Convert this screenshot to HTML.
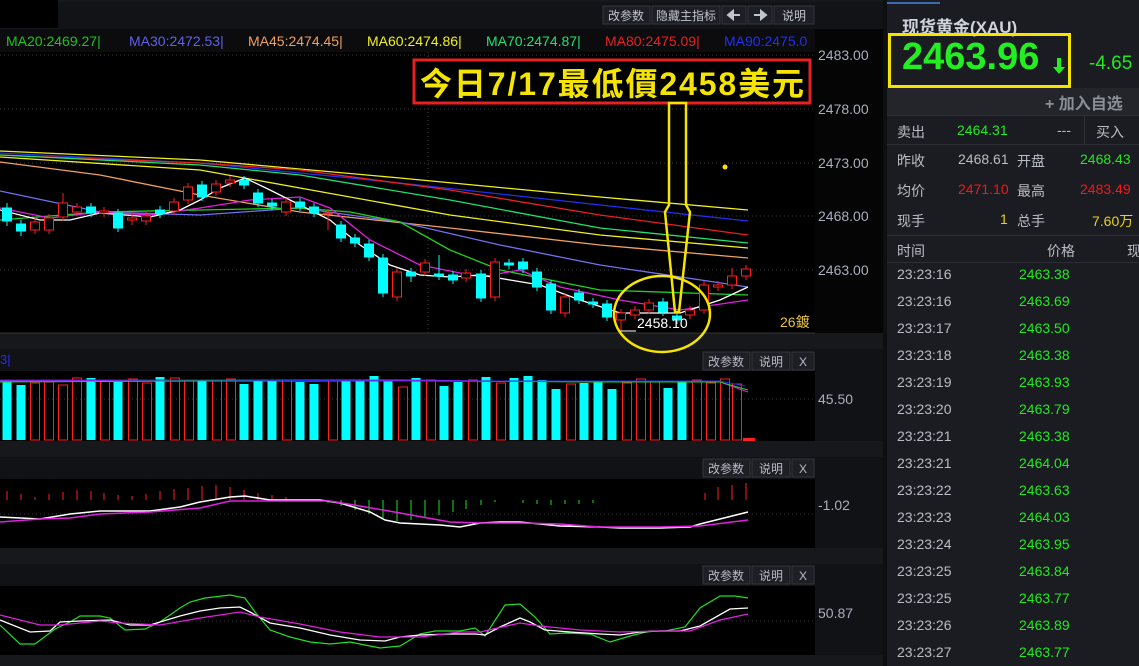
<!DOCTYPE html>
<html><head><meta charset="utf-8"><style>
body{margin:0;width:1139px;height:666px;background:#17181c;overflow:hidden;position:relative;font-family:"Liberation Sans","Noto Sans CJK SC",sans-serif}
svg text{font-family:"Liberation Sans","Noto Sans CJK SC",sans-serif}
#rp{position:absolute;left:887px;top:0;width:252px;height:666px;background:#1b1c21;color:#c8ccd4}
.a{position:absolute;white-space:nowrap}
.g{color:#22e822}.r{color:#f01818}.y{color:#e8d020}.gr{color:#b8bcc6}
.hl{position:absolute;left:0;width:252px;height:1px;background:#2c2e34}
</style></head><body>
<svg width="887" height="666" style="position:absolute;left:0;top:0">
<rect x="0" y="0" width="887" height="666" fill="#17181c"/>
<rect x="0" y="0" width="58" height="28" fill="#000"/>
<rect x="58" y="2" width="825" height="27" fill="#121317"/>
<g font-size="12" fill="#c0c4cc">
<rect x="603" y="6" width="47" height="18" fill="#1e1f24" stroke="#34363c"/><text x="608" y="20">改参数</text>
<rect x="652" y="6" width="68" height="18" fill="#1e1f24" stroke="#34363c"/><text x="656" y="20">隐藏主指标</text>
<rect x="722" y="6" width="24" height="18" fill="#1e1f24" stroke="#34363c"/><path d="M728 15h12M728 15l5-4v8z" stroke="#c0c4cc" fill="#c0c4cc" stroke-width="2"/>
<rect x="748" y="6" width="24" height="18" fill="#1e1f24" stroke="#34363c"/><path d="M754 15h12M766 15l-5-4v8z" stroke="#c0c4cc" fill="#c0c4cc" stroke-width="2"/>
<rect x="774" y="6" width="40" height="18" fill="#1e1f24" stroke="#34363c"/><text x="782" y="20">说明</text>
</g>
<rect x="0" y="29" width="815" height="23" fill="#0c0c0e"/>
<g font-size="14">
<text x="6" y="46" fill="#22c020">MA20:2469.27|</text>
<text x="129" y="46" fill="#6060e8">MA30:2472.53|</text>
<text x="248" y="46" fill="#f0a060">MA45:2474.45|</text>
<text x="367" y="46" fill="#f0f020">MA60:2474.86|</text>
<text x="486" y="46" fill="#20e070">MA70:2474.87|</text>
<text x="605" y="46" fill="#e82020">MA80:2475.09|</text>
<text x="724" y="46" fill="#2030f0">MA90:2475.0</text>
</g>
<rect x="0" y="52" width="815" height="281" fill="#000"/>
<rect x="815" y="29" width="68" height="304" fill="#050506"/>
<g stroke="#3a3a3a" stroke-dasharray="1,3"><line x1="0" y1="55" x2="815" y2="55"/><line x1="0" y1="109" x2="815" y2="109"/><line x1="0" y1="163" x2="815" y2="163"/><line x1="0" y1="216" x2="815" y2="216"/><line x1="0" y1="270" x2="815" y2="270"/><line x1="428" y1="52" x2="428" y2="333"/></g>
<g font-size="14" fill="#a8aeba"><text x="818" y="60">2483.00</text><text x="818" y="114">2478.00</text><text x="818" y="168">2473.00</text><text x="818" y="221">2468.00</text><text x="818" y="275">2463.00</text></g>
<g fill="none" stroke-width="1.3">
<polyline stroke="#f0f020" points="0,151 200,160 400,178 600,197 748,210"/>
<polyline stroke="#2030f0" points="0,153 200,163 400,183 600,205 748,221"/>
<polyline stroke="#e82020" points="0,155 200,163 300,170 450,190 600,215 748,235"/>
<polyline stroke="#20e070" points="0,155 200,165 300,175 450,200 600,228 748,243"/>
<polyline stroke="#f0f020" points="0,157 200,170 300,188 450,215 600,235 748,248"/>
<polyline stroke="#f0a060" points="0,162 100,175 200,195 300,212 450,228 600,245 748,258"/>
<polyline stroke="#7070f0" points="0,191 100,212 200,215 300,208 400,222 500,245 600,265 748,287"/>
<polyline stroke="#20d020" points="0,220 100,212 200,210 300,208 350,212 400,222 450,250 500,270 600,290 748,295"/>
<polyline stroke="#e020e0" points="0,208 50,218 100,212 150,215 200,208 250,200 300,197 330,208 370,240 420,265 480,277 520,270 560,287 620,300 680,310 748,300"/>
<polyline stroke="#fff" points="0,210 40,220 70,220 100,213 150,217 180,210 200,200 220,188 245,178 270,190 300,205 330,220 360,245 390,265 420,275 450,277 480,275 510,280 540,285 580,300 620,313 680,313 720,300 748,287"/>
</g>
<g stroke-width="1">
<g stroke="#00ffff" fill="#00ffff">
<line x1="7" y1="203" x2="7" y2="226"/><rect x="2.5" y="208" width="9" height="13"/>
<line x1="21" y1="220" x2="21" y2="236"/><rect x="16.5" y="224" width="9" height="7"/>
<line x1="91" y1="203" x2="91" y2="217"/><rect x="86.5" y="207" width="9" height="6"/>
<line x1="118" y1="209" x2="118" y2="232"/><rect x="113.5" y="213" width="9" height="15"/>
<line x1="160" y1="206" x2="160" y2="218"/><rect x="155.5" y="210" width="9" height="4"/>
<line x1="202" y1="181" x2="202" y2="201"/><rect x="197.5" y="185" width="9" height="12"/>
<line x1="244" y1="176" x2="244" y2="189"/><rect x="239.5" y="180" width="9" height="5"/>
<line x1="258" y1="189" x2="258" y2="207"/><rect x="253.5" y="193" width="9" height="10"/>
<line x1="272" y1="199" x2="272" y2="210"/><rect x="267.5" y="203" width="9" height="3"/>
<line x1="300" y1="198" x2="300" y2="211"/><rect x="295.5" y="202" width="9" height="5"/>
<line x1="314" y1="203" x2="314" y2="217"/><rect x="309.5" y="207" width="9" height="6"/>
<line x1="341" y1="221" x2="341" y2="242"/><rect x="336.5" y="225" width="9" height="13"/>
<line x1="355" y1="234" x2="355" y2="247"/><rect x="350.5" y="238" width="9" height="5"/>
<line x1="369" y1="240" x2="369" y2="261"/><rect x="364.5" y="244" width="9" height="13"/>
<line x1="383" y1="254" x2="383" y2="297"/><rect x="378.5" y="258" width="9" height="35"/>
<line x1="411" y1="268" x2="411" y2="282"/><rect x="406.5" y="272" width="9" height="4"/>
<line x1="439" y1="255" x2="439" y2="280"/><rect x="434.5" y="274" width="9" height="2"/>
<line x1="453" y1="271" x2="453" y2="284"/><rect x="448.5" y="275" width="9" height="5"/>
<line x1="481" y1="270" x2="481" y2="302"/><rect x="476.5" y="274" width="9" height="24"/>
<line x1="509" y1="259" x2="509" y2="269"/><rect x="504.5" y="263" width="9" height="2"/>
<line x1="523" y1="258" x2="523" y2="273"/><rect x="518.5" y="262" width="9" height="7"/>
<line x1="537" y1="268" x2="537" y2="291"/><rect x="532.5" y="272" width="9" height="15"/>
<line x1="551" y1="280" x2="551" y2="314"/><rect x="546.5" y="284" width="9" height="26"/>
<line x1="579" y1="289" x2="579" y2="304"/><rect x="574.5" y="293" width="9" height="7"/>
<line x1="593" y1="298" x2="593" y2="308"/><rect x="588.5" y="302" width="9" height="2"/>
<line x1="607" y1="300" x2="607" y2="321"/><rect x="602.5" y="304" width="9" height="13"/>
<line x1="663" y1="298" x2="663" y2="316"/><rect x="658.5" y="302" width="9" height="10"/>
<line x1="677" y1="312" x2="677" y2="324"/><rect x="672.5" y="316" width="9" height="4"/>
</g>
<g stroke="#ff2020" fill="#000">
<line x1="35" y1="218" x2="35" y2="234"/><rect x="30.5" y="222" width="9" height="8"/>
<line x1="49" y1="214" x2="49" y2="234"/><rect x="44.5" y="218" width="9" height="12"/>
<line x1="63" y1="193" x2="63" y2="221"/><rect x="58.5" y="203" width="9" height="14"/>
<line x1="77" y1="203" x2="77" y2="216"/><rect x="72.5" y="207" width="9" height="5"/>
<line x1="104" y1="207" x2="104" y2="217"/><rect x="99.5" y="211" width="9" height="2"/>
<line x1="132" y1="212" x2="132" y2="225"/><rect x="127.5" y="218" width="9" height="2"/>
<line x1="146" y1="212" x2="146" y2="225"/><rect x="141.5" y="216" width="9" height="5"/>
<line x1="174" y1="198" x2="174" y2="215"/><rect x="169.5" y="202" width="9" height="9"/>
<line x1="188" y1="183" x2="188" y2="204"/><rect x="183.5" y="187" width="9" height="13"/>
<line x1="216" y1="180" x2="216" y2="196"/><rect x="211.5" y="184" width="9" height="8"/>
<line x1="230" y1="176" x2="230" y2="187"/><rect x="225.5" y="180" width="9" height="3"/>
<line x1="286" y1="198" x2="286" y2="216"/><rect x="281.5" y="202" width="9" height="10"/>
<line x1="328" y1="209" x2="328" y2="230"/><rect x="323.5" y="213" width="9" height="1"/>
<line x1="397" y1="268" x2="397" y2="301"/><rect x="392.5" y="272" width="9" height="25"/>
<line x1="425" y1="259" x2="425" y2="276"/><rect x="420.5" y="263" width="9" height="9"/>
<line x1="466" y1="269" x2="466" y2="282"/><rect x="461.5" y="273" width="9" height="5"/>
<line x1="495" y1="258" x2="495" y2="301"/><rect x="490.5" y="262" width="9" height="35"/>
<line x1="565" y1="293" x2="565" y2="317"/><rect x="560.5" y="297" width="9" height="16"/>
<line x1="621" y1="309" x2="621" y2="332"/><rect x="616.5" y="313" width="9" height="7"/>
<line x1="635" y1="306" x2="635" y2="319"/><rect x="630.5" y="310" width="9" height="5"/>
<line x1="649" y1="299" x2="649" y2="314"/><rect x="644.5" y="303" width="9" height="7"/>
<line x1="690" y1="306" x2="690" y2="319"/><rect x="685.5" y="310" width="9" height="5"/>
<line x1="704" y1="281" x2="704" y2="314"/><rect x="699.5" y="285" width="9" height="25"/>
<line x1="718" y1="281" x2="718" y2="291"/><rect x="713.5" y="285" width="9" height="2"/>
<line x1="732" y1="268" x2="732" y2="289"/><rect x="727.5" y="276" width="9" height="9"/>
<line x1="746" y1="265" x2="746" y2="280"/><rect x="741.5" y="269" width="9" height="7"/>
</g>
</g>
<line x1="620" y1="331" x2="636" y2="331" stroke="#fff"/>
<text x="637" y="328" font-size="14" fill="#fff">2458.10</text>
<circle cx="725" cy="167" r="2.5" fill="#f5e400"/>
<text x="780" y="327" font-size="14" fill="#e8c040">26鍍</text>
<rect x="414" y="60" width="396" height="43" fill="#000" stroke="#e82020" stroke-width="3"/>
<text x="420" y="95" font-size="32" font-weight="bold" fill="#f5e400" textLength="384">今日7/17最低價2458美元</text>
<line x1="0" y1="333" x2="815" y2="333" stroke="#333"/>

<rect x="0" y="349" width="815" height="22" fill="#111215"/>
<text x="0" y="364" font-size="13" fill="#2030f0">3|</text>
<rect x="0" y="371" width="815" height="70" fill="#000"/>
<rect x="815" y="349" width="68" height="92" fill="#111215"/>
<text x="818" y="404" font-size="14" fill="#a8aeba">45.50</text>
<line x1="0" y1="399" x2="815" y2="399" stroke="#333" stroke-dasharray="1,3"/>
<g fill="#00ffff">
<rect x="2.5" y="382" width="9" height="58"/><rect x="16.5" y="385" width="9" height="55"/><rect x="86.5" y="378" width="9" height="62"/><rect x="113.5" y="382" width="9" height="58"/><rect x="155.5" y="377" width="9" height="63"/><rect x="197.5" y="380" width="9" height="60"/><rect x="239.5" y="384" width="9" height="56"/><rect x="253.5" y="380" width="9" height="60"/><rect x="267.5" y="381" width="9" height="59"/><rect x="295.5" y="382" width="9" height="58"/><rect x="309.5" y="384" width="9" height="56"/><rect x="341.5" y="380" width="9" height="60"/><rect x="355.5" y="381" width="9" height="59"/><rect x="369.5" y="376" width="9" height="64"/><rect x="383.5" y="381" width="9" height="59"/><rect x="411.5" y="378" width="9" height="62"/><rect x="439.5" y="386" width="9" height="54"/><rect x="453.5" y="382" width="9" height="58"/><rect x="481.5" y="377" width="9" height="63"/><rect x="509.5" y="378" width="9" height="62"/><rect x="523.5" y="376" width="9" height="64"/><rect x="537.5" y="380" width="9" height="60"/><rect x="551.5" y="389" width="9" height="51"/><rect x="579.5" y="383" width="9" height="57"/><rect x="593.5" y="381" width="9" height="59"/><rect x="607.5" y="389" width="9" height="51"/><rect x="663.5" y="388" width="9" height="52"/><rect x="677.5" y="381" width="9" height="59"/>
</g>
<g fill="none" stroke="#ff2020">
<rect x="30.5" y="383" width="9" height="57"/><rect x="44.5" y="382" width="9" height="58"/><rect x="58.5" y="385" width="9" height="55"/><rect x="72.5" y="378" width="9" height="62"/><rect x="100.5" y="380" width="9" height="60"/><rect x="128.5" y="379" width="9" height="61"/><rect x="142.5" y="383" width="9" height="57"/><rect x="170.5" y="378" width="9" height="62"/><rect x="184.5" y="381" width="9" height="59"/><rect x="212.5" y="381" width="9" height="59"/><rect x="226.5" y="379" width="9" height="61"/><rect x="282.5" y="380" width="9" height="60"/><rect x="328.5" y="381" width="9" height="59"/><rect x="398.5" y="387" width="9" height="53"/><rect x="426.5" y="380" width="9" height="60"/><rect x="468.5" y="380" width="9" height="60"/><rect x="496.5" y="383" width="9" height="57"/><rect x="566.5" y="384" width="9" height="56"/><rect x="622.5" y="383" width="9" height="57"/><rect x="636.5" y="379" width="9" height="61"/><rect x="650.5" y="381" width="9" height="59"/><rect x="692.5" y="380" width="9" height="60"/><rect x="706.5" y="383" width="9" height="57"/><rect x="720.5" y="379" width="9" height="61"/><rect x="732.5" y="384" width="9" height="56"/>
</g>
<rect x="743" y="438" width="12" height="3" fill="#ff2020"/>
<polyline fill="none" stroke="#e020e0" points="0,381 200,380 400,380 600,382 720,382 748,392"/>
<polyline fill="none" stroke="#20d020" points="0,382 200,381 400,381 600,382 720,382 748,390"/>
<polyline fill="none" stroke="#2030f0" points="0,380 200,380 400,381 600,381 720,381 745,386"/>
<g font-size="12" fill="#b8bcc6">
<rect x="703" y="352" width="47" height="18" fill="#1e1f24" stroke="#34363c"/><text x="708" y="366">改参数</text>
<rect x="752" y="352" width="38" height="18" fill="#1e1f24" stroke="#34363c"/><text x="759" y="366">说明</text>
<rect x="792" y="352" width="22" height="18" fill="#1e1f24" stroke="#34363c"/><text x="799" y="366">X</text>
</g>

<rect x="0" y="457" width="815" height="22" fill="#111215"/>
<rect x="0" y="479" width="815" height="69" fill="#000"/>
<rect x="815" y="457" width="68" height="91" fill="#111215"/>
<text x="818" y="510" font-size="14" fill="#a8aeba">-1.02</text>
<line x1="0" y1="514" x2="815" y2="514" stroke="#333" stroke-dasharray="1,3"/>
<g stroke="#ff2020"><path d="M7 491V500M21 494V500M35 497V500M49 494V500M63 492V500M77 490V500M91 491V500M104 493V500M118 495V500M132 496V500M146 494V500M160 491V500M174 489V500M188 488V500M202 486V500M216 485V500M230 487V500M244 490V500M258 493V500M272 495V500M286 497V500M705 493V500M718 487V500M732 485V500M746 483V500"/></g>
<g stroke="#20e020"><path d="M328 500V503M341 500V506M355 500V510M369 500V514M383 500V518M397 500V521M411 500V520M425 500V517M439 500V515M453 500V512M466 500V509M481 500V505M495 500V502M523 500V503M537 500V504M551 500V505M565 500V504M579 500V504M593 500V503"/></g>
<polyline fill="none" stroke="#fff" stroke-width="1.5" points="0,517 40,519 70,514 100,511 150,511 180,507 200,502 230,497 245,496 270,500 300,500 320,500 340,503 370,512 385,520 400,523 420,524 440,525 460,527 480,523 500,522 520,522 560,526 600,527 620,528 660,528 690,527 700,524 748,512"/>
<polyline fill="none" stroke="#e020e0" stroke-width="1.5" points="0,522 40,519 70,518 100,514 150,512 200,508 230,501 260,501 300,501 330,501 360,506 400,513 450,522 480,523 520,523 560,524 600,527 660,527 700,526 748,520"/>
<g font-size="12" fill="#b8bcc6">
<rect x="703" y="459" width="47" height="18" fill="#1e1f24" stroke="#34363c"/><text x="708" y="473">改参数</text>
<rect x="752" y="459" width="38" height="18" fill="#1e1f24" stroke="#34363c"/><text x="759" y="473">说明</text>
<rect x="792" y="459" width="22" height="18" fill="#1e1f24" stroke="#34363c"/><text x="799" y="473">X</text>
</g>

<rect x="0" y="564" width="815" height="22" fill="#111215"/>
<rect x="0" y="586" width="815" height="69" fill="#000"/>
<rect x="815" y="564" width="68" height="91" fill="#111215"/>
<text x="818" y="618" font-size="14" fill="#a8aeba">50.87</text>
<line x1="0" y1="621" x2="815" y2="621" stroke="#333" stroke-dasharray="1,3"/>
<polyline fill="none" stroke="#20e020" stroke-width="1.2" points="0,625 20,644 35,644 55,629 70,622 80,616 100,616 110,618 125,630 145,629 160,622 180,608 190,602 205,598 230,595 245,598 255,612 270,630 290,637 310,642 330,644 350,642 380,648 400,646 420,634 435,631 460,631 475,628 485,636 505,605 520,604 535,617 550,634 565,633 590,634 610,642 630,636 650,631 665,631 685,627 700,608 720,596 735,596 748,598"/>
<polyline fill="none" stroke="#fff" stroke-width="1.3" points="0,620 30,632 50,631 60,622 80,621 110,620 130,625 150,625 180,616 200,611 220,608 240,607 250,612 270,623 300,628 330,635 360,640 385,641 400,637 420,635 450,634 475,634 485,635 500,627 520,618 530,622 545,630 570,632 600,634 620,635 640,632 660,631 680,631 700,626 730,609 748,608"/>
<polyline fill="none" stroke="#e020e0" stroke-width="1.3" points="0,615 40,625 60,625 100,621 120,623 160,625 200,618 240,612 260,617 300,624 340,632 380,637 420,637 460,632 480,632 520,623 540,626 580,630 620,632 660,631 690,631 720,620 748,614"/>
<g font-size="12" fill="#b8bcc6">
<rect x="703" y="566" width="47" height="18" fill="#1e1f24" stroke="#34363c"/><text x="708" y="580">改参数</text>
<rect x="752" y="566" width="38" height="18" fill="#1e1f24" stroke="#34363c"/><text x="759" y="580">说明</text>
<rect x="792" y="566" width="22" height="18" fill="#1e1f24" stroke="#34363c"/><text x="799" y="580">X</text>
</g>
<ellipse cx="662" cy="314" rx="48" ry="38" fill="none" stroke="#f5e400" stroke-width="2.5"/>
<polygon points="669,103 686,103 686,205 690,212 679,312 675,312 665,212 669,205" fill="none" stroke="#f5e400" stroke-width="2.5"/>
<rect x="883" y="0" width="4" height="666" fill="#0e0f12"/>
</svg>

<div id="rp">
<div style="position:absolute;left:0;top:2px;width:53px;height:2px;background:#3a6ab0"></div>
<div class="a" style="left:15px;top:13px;font-size:17px;font-weight:bold;color:#cfd3db">现货黄金(XAU)</div>
<div style="position:absolute;left:1px;top:33px;width:177px;height:49px;border:3px solid #f5e400"></div>
<div class="a" style="left:15px;top:36px;font-size:38px;font-weight:bold;color:#22ee22">2463.96</div>
<svg style="position:absolute;left:165px;top:56px" width="14" height="20"><path d="M7 2V14" stroke="#22ee22" stroke-width="4"/><path d="M1 11h12l-6 7z" fill="#22ee22"/></svg>
<div class="a g" style="left:202px;top:53px;font-size:19px">-4.65</div>
<div style="position:absolute;left:0;top:88px;width:252px;height:27px;background:#24252a"></div>
<div class="a" style="left:158px;top:90px;font-size:16px;font-weight:bold;color:#8a8e96">+ 加入自选</div>
<div class="hl" style="top:115px"></div>
<div class="a gr" style="left:10px;top:122px;font-size:14px">卖出</div>
<div class="a g" style="left:70px;top:122px;font-size:14px">2464.31</div>
<div class="a gr" style="left:170px;top:122px;font-size:14px">---</div>
<div style="position:absolute;left:197px;top:115px;width:1px;height:29px;background:#2c2e34"></div>
<div class="a gr" style="left:209px;top:122px;font-size:14px">买入</div>
<div class="hl" style="top:144px"></div>
<div class="a gr" style="left:10px;top:151px;font-size:14px">昨收</div><div class="a gr" style="left:71px;top:151px;font-size:14px">2468.61</div><div class="a gr" style="left:130px;top:151px;font-size:14px">开盘</div><div class="a g" style="left:193px;top:151px;font-size:14px">2468.43</div>
<div class="a gr" style="left:10px;top:181px;font-size:14px">均价</div><div class="a r" style="left:71px;top:181px;font-size:14px">2471.10</div><div class="a gr" style="left:130px;top:181px;font-size:14px">最高</div><div class="a r" style="left:193px;top:181px;font-size:14px">2483.49</div>
<div class="a gr" style="left:10px;top:211px;font-size:14px">现手</div><div class="a y" style="left:113px;top:211px;font-size:14px">1</div><div class="a gr" style="left:130px;top:211px;font-size:14px">总手</div><div class="a y" style="left:205px;top:211px;font-size:14px">7.60万</div>
<div class="hl" style="top:235px"></div>
<div class="a gr" style="left:10px;top:241px;font-size:14px">时间</div><div class="a gr" style="left:160px;top:241px;font-size:14px">价格</div><div class="a gr" style="left:240px;top:241px;font-size:14px">现</div>
<div class="hl" style="top:262px"></div>
<div class="a gr" style="left:10px;top:261px;font-size:14px;line-height:27px">23:23:16<br>23:23:16<br>23:23:17<br>23:23:18<br>23:23:19<br>23:23:20<br>23:23:21<br>23:23:21<br>23:23:22<br>23:23:23<br>23:23:24<br>23:23:25<br>23:23:25<br>23:23:26<br>23:23:27</div>
<div class="a g" style="left:132px;top:261px;font-size:14px;line-height:27px">2463.38<br>2463.69<br>2463.50<br>2463.38<br>2463.93<br>2463.79<br>2463.38<br>2464.04<br>2463.63<br>2464.03<br>2463.95<br>2463.84<br>2463.77<br>2463.89<br>2463.77</div>
</div>
</body></html>
